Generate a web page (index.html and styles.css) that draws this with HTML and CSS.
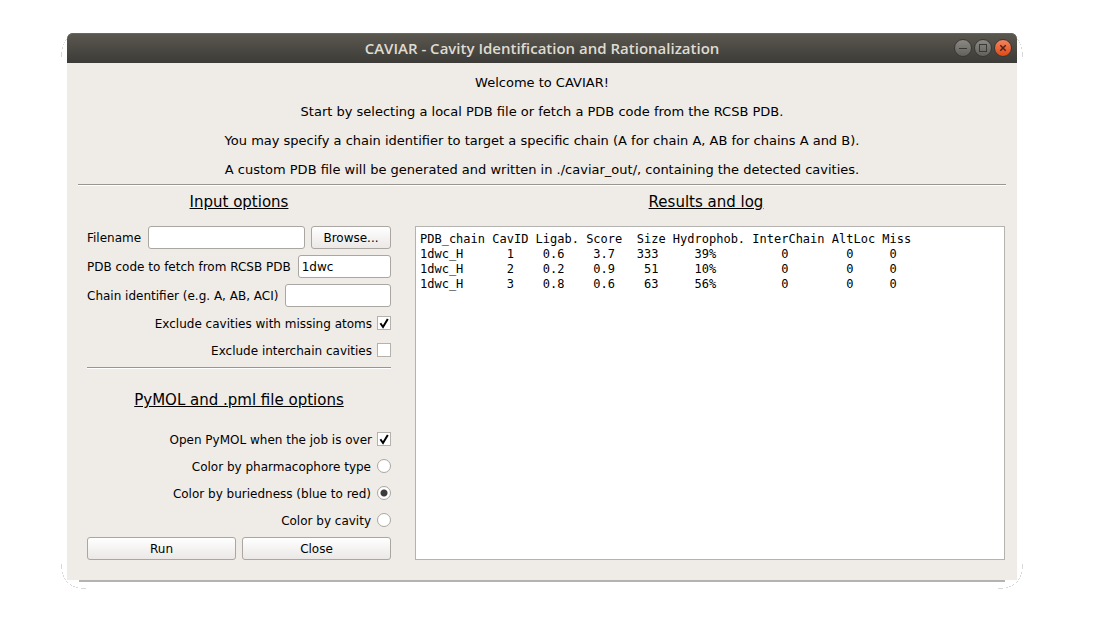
FILE: index.html
```html
<!DOCTYPE html>
<html lang="en">
<head>
<meta charset="utf-8">
<title>CAVIAR</title>
<link rel="stylesheet" href="styles.css">
</head>
<body>
<main class="window">
  <header class="titlebar">
    <h1 class="titlebar-text">CAVIAR - Cavity Identification and Rationalization</h1>
    <div class="controls">
      <button class="control" type="button" aria-label="Minimize"><svg width="16" height="16" viewBox="0 0 16 16"><path d="M4 8.500h8" stroke="#3a3934" fill="none"/></svg></button>
      <button class="control" type="button" aria-label="Maximize"><svg width="16" height="16" viewBox="0 0 16 16"><rect x="4.500" y="4.500" width="7" height="7" stroke="#3a3934" fill="none"/></svg></button>
      <button class="control control-close" type="button" aria-label="Close window"><svg width="16" height="16" viewBox="0 0 16 16"><path d="M5.300 5.300l5.400 5.400M10.700 5.300l-5.400 5.400" stroke="#4a2415" stroke-width="1.500" fill="none"/></svg></button>
    </div>
  </header>

  <div class="content">
    <section class="intro">
      <p>Welcome to CAVIAR!</p>
      <p>Start by selecting a local PDB file or fetch a PDB code from the RCSB PDB.</p>
      <p>You may specify a chain identifier to target a specific chain (A for chain A, AB for chains A and B).</p>
      <p>A custom PDB file will be generated and written in ./caviar_out/, containing the detected cavities.</p>
    </section>
    <hr class="rule">
    <div class="columns">
      <form class="options">
        <h2 class="heading">Input options</h2>
        <div class="row">
          <label for="filename">Filename</label>
          <input class="field" id="filename" type="text">
          <button class="button browse" type="button">Browse...</button>
        </div>
        <div class="row">
          <label for="pdb">PDB code to fetch from RCSB PDB</label>
          <input class="field" id="pdb" type="text" value="1dwc">
        </div>
        <div class="row">
          <label for="chain">Chain identifier (e.g. A, AB, ACI)</label>
          <input class="field" id="chain" type="text">
        </div>
        <div class="choice">
          <label for="missing">Exclude cavities with missing atoms</label>
          <span class="tick"><input class="box" id="missing" type="checkbox" checked><svg class="mark" width="14" height="14" viewBox="0 0 14 14"><path d="M3.400 7.300L6 11L10.800 3" /></svg></span>
        </div>
        <div class="choice">
          <label for="interchain">Exclude interchain cavities</label>
          <span class="tick"><input class="box" id="interchain" type="checkbox"><svg class="mark" width="14" height="14" viewBox="0 0 14 14"><path d="M3.400 7.300L6 11L10.800 3" /></svg></span>
        </div>
        <hr class="rule">
        <h2 class="heading heading-tall">PyMOL and .pml file options</h2>
        <div class="choice">
          <label for="open">Open PyMOL when the job is over</label>
          <span class="tick"><input class="box" id="open" type="checkbox" checked><svg class="mark" width="14" height="14" viewBox="0 0 14 14"><path d="M3.400 7.300L6 11L10.800 3" /></svg></span>
        </div>
        <div class="choice">
          <label for="pharma">Color by pharmacophore type</label>
          <input class="box round" id="pharma" name="color" type="radio">
        </div>
        <div class="choice">
          <label for="buried">Color by buriedness (blue to red)</label>
          <input class="box round" id="buried" name="color" type="radio" checked>
        </div>
        <div class="choice">
          <label for="cavity">Color by cavity</label>
          <input class="box round" id="cavity" name="color" type="radio">
        </div>
        <div class="row">
          <button class="button wide" type="button">Run</button>
          <button class="button wide" type="button">Close</button>
        </div>
      </form>

      <section class="results">
        <h2 class="heading heading-log">Results and log</h2>
        <div class="log">
          <table class="table">
            <colgroup><col class="c10"><col class="c6"><col class="c7"><col class="c6"><col class="c6"><col class="c11"><col class="c11"><col class="c7"><col class="c4"></colgroup>
            <thead><tr><th>PDB_chain</th><th>CavID</th><th>Ligab.</th><th>Score</th><th class="size">Size</th><th>Hydrophob.</th><th>InterChain</th><th>AltLoc</th><th>Miss</th></tr></thead>
            <tbody>
              <tr><td>1dwc_H</td><td class="in2">1</td><td class="in1">0.6</td><td class="in1">3.7</td><td class="size">333</td><td class="in3">39%</td><td class="in4">0</td><td class="in2">0</td><td class="in1">0</td></tr>
              <tr><td>1dwc_H</td><td class="in2">2</td><td class="in1">0.2</td><td class="in1">0.9</td><td class="size">51</td><td class="in3">10%</td><td class="in4">0</td><td class="in2">0</td><td class="in1">0</td></tr>
              <tr><td>1dwc_H</td><td class="in2">3</td><td class="in1">0.8</td><td class="in1">0.6</td><td class="size">63</td><td class="in3">56%</td><td class="in4">0</td><td class="in2">0</td><td class="in1">0</td></tr>
            </tbody>
          </table>
        </div>
      </section>
    </div>
  </div>
  <div class="edge"></div>
  <svg class="corner top left" width="6" height="20" viewBox="0 0 6 20" aria-hidden="true"><path d="M.5 13v5M1.500 8v2M2.500 5v1M3.500 3v1M4.500 1v1M5.500 0v1"/></svg>
  <svg class="corner top right" width="6" height="20" viewBox="0 0 6 20" aria-hidden="true"><path d="M.5 13v5M1.500 8v2M2.500 5v1M3.500 3v1M4.500 1v1M5.500 0v1"/></svg>
  <svg class="corner bottom left" width="26" height="26" viewBox="0 0 26 26" aria-hidden="true"><path d="M.5 1v5M1.500 9v2M2.500 12v2M3.500 15v1M4.500 16v1M5.500 18v1M6 19.500h1M9 21.500h1M10 22.500h1M12 23.500h2M15 24.500h2M20 25.500h5"/></svg>
  <svg class="corner bottom right" width="26" height="26" viewBox="0 0 26 26" aria-hidden="true"><path d="M.5 1v5M1.500 9v2M2.500 12v2M3.500 15v1M4.500 16v1M5.500 18v1M6 19.500h1M9 21.500h1M10 22.500h1M12 23.500h2M15 24.500h2M20 25.500h5"/></svg>
</main>
</body>
</html>
```

FILE: styles.css
```css
* { box-sizing: border-box; }

body {
  margin: 0;
  padding: 33px 78px 48px 67px;
  min-height: 100vh;
  background: #fff;
  color: #000;
  font: 12px/15px "DejaVu Sans", sans-serif;
  display: flex;
}

h1, h2, p, hr { margin: 0; }

.window {
  position: relative;
  flex: 1;
  display: flex;
  flex-direction: column;
}

.titlebar {
  display: grid;
  grid-template-columns: 1fr auto 1fr;
  align-items: center;
  height: 30px;
  padding: 0 5px;
  border-radius: 6px 6px 0 0;
  background: linear-gradient(#5b5850, #3d3b37);
  box-shadow: inset 0 1px #69665c;
}

.titlebar-text {
  grid-column: 2;
  color: #dfdbd2;
  font: 600 15px/20px "Open Sans", "Noto Sans", sans-serif;
}

.controls {
  display: flex;
  justify-content: flex-end;
  gap: 2px;
}

.control {
  width: 18px;
  height: 18px;
  padding: 0;
  display: flex;
  border: 1px solid #393834;
  border-radius: 50%;
  background: linear-gradient(#8b8982, #62615b);
}

.control-close { background: linear-gradient(#f58360, #df4a16); }

.content {
  flex: 1;
  display: flex;
  flex-direction: column;
  padding: 5px 11px 20px;
  background: #efebe7;
}

.intro {
  text-align: center;
  font-size: 13px;
  line-height: 29px;
}

.rule {
  width: 100%;
  height: 2px;
  border: 0;
  border-top: 1px solid #999692;
  background: #fff;
}

.columns {
  flex: 1;
  display: grid;
  grid-template-columns: minmax(304px, 1fr) 2fr;
  gap: 24px;
  padding: 6px 1px 0 9px;
}

.options, .results {
  display: flex;
  flex-direction: column;
  gap: 6px;
}

.heading {
  height: 28px;
  text-align: center;
  font-size: 15px;
  font-weight: normal;
  line-height: 20px;
  text-decoration: underline;
}

.heading-tall {
  height: 48px;
  line-height: 50px;
}

.heading-log { padding-right: 8px; }

.row {
  display: flex;
  align-items: center;
  gap: 6px;
}

.row label, .choice label { padding-top: 2px; }
.row label { margin-right: 1px; }

.field {
  flex: 1;
  min-width: 0;
  height: 23px;
  padding: 0 3px;
  border: 1px solid #aaa6a2;
  border-radius: 3px;
  background: #fff;
  color: #000;
  font: inherit;
}

.button {
  height: 23px;
  padding: 2px 0 0;
  border: 1px solid #aaa6a2;
  border-radius: 3px;
  background: linear-gradient(#fff, #ebe8e6);
  color: #000;
  font: inherit;
}

.browse { width: 80px; }
.wide { flex: 1; }

.choice {
  display: flex;
  align-items: center;
  justify-content: flex-end;
  gap: 5px;
  height: 21px;
}

.tick { display: grid; }

.box {
  appearance: none;
  grid-area: 1 / 1;
  width: 14px;
  height: 14px;
  margin: 0 0 1px;
  border: 1px solid #b5b1ad;
  background: #fff;
}

.round {
  margin-left: 1px;
  border-radius: 50%;
  border-color: #aaa7a3;
}

.round:checked { background: radial-gradient(circle, #3c3c3c 3px, #fff 4px); }

.mark {
  grid-area: 1 / 1;
  visibility: hidden;
  pointer-events: none;
  fill: none;
  stroke: #000;
  stroke-width: 2;
}

.box:checked + .mark { visibility: visible; }

.log {
  flex: 1;
  padding: 5px 4px;
  border: 1px solid #b5b3b0;
  background: #fff;
  font-family: "DejaVu Sans Mono", monospace;
}

.table {
  width: 68ch;
  table-layout: fixed;
  border-collapse: collapse;
}

.table th, .table td {
  padding: 0;
  text-align: left;
  font-weight: normal;
  white-space: nowrap;
}

.c4 { width: 4ch; }
.c6 { width: 6ch; }
.c7 { width: 7ch; }
.c10 { width: 10ch; }
.c11 { width: 11ch; }
.table .in1 { padding-left: 1ch; }
.table .in2 { padding-left: 2ch; }
.table .in3 { padding-left: 3ch; }
.table .in4 { padding-left: 4ch; }
.table .size { padding-right: 1ch; text-align: right; }
.table td.size { padding-right: 2ch; }

.edge {
  height: 2px;
  margin: 0 12px;
  background: #b5b3b0;
}

.corner {
  position: absolute;
  fill: none;
  stroke: #d8d8d8;
}

.top { top: 6px; }
.bottom { bottom: -7px; }
.left { left: -6px; }
.right { right: -6px; transform: scaleX(-1); }
```
